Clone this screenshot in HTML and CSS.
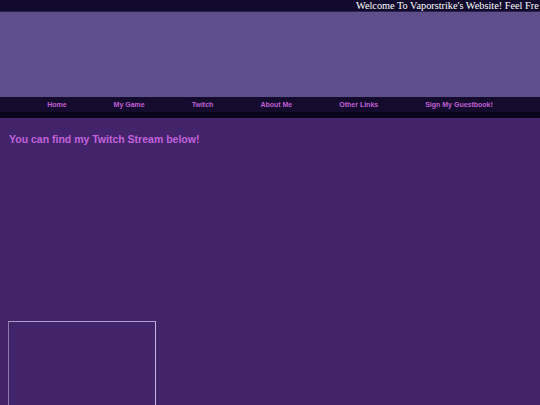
FILE: index.html
```html
<!DOCTYPE html>
<html>
<head>
<meta charset="utf-8">
<link rel="stylesheet" href="styles.css">
</head>
<body>
<div class="topbar"><span class="marquee">Welcome To Vaporstrike's Website! Feel Fre</span></div>
<div class="banner"></div>
<nav class="nav">
  <a class="nav-link" href="#">Home</a>
  <a class="nav-link" href="#">My Game</a>
  <a class="nav-link" href="#">Twitch</a>
  <a class="nav-link" href="#">About Me</a>
  <a class="nav-link" href="#">Other Links</a>
  <a class="nav-link" href="#">Sign My Guestbook!</a>
</nav>
<div class="nav-shadow"></div>
<main class="content">
  <h1 class="title">You can find my Twitch Stream below!</h1>
  <div class="player"></div>
</main>
</body>
</html>
```
FILE: styles.css
```css
html, body {
  margin: 0;
  padding: 0;
  height: 100%;
  overflow: hidden;
  background: #42246a;
}
.topbar {
  height: 12px;
  background: #120a2c;
  overflow: hidden;
  white-space: nowrap;
  border-bottom: 1px solid #2e2150;
  box-sizing: border-box;
}
.marquee {
  display: block;
  padding-left: 356px;
  font-family: "Liberation Serif", serif;
  font-size: 10.3px;
  line-height: 12px;
  color: #ffffff;
}
.banner {
  height: 85px;
  background: #5e4f8c;
}
.nav {
  height: 15px;
  background: #150b2d;
  display: flex;
  justify-content: center;
  align-items: center;
}
.nav-link {
  padding: 0 23.5px;
  font-family: "Liberation Sans", Arial, sans-serif;
  font-size: 7px;
  font-weight: bold;
  color: #c05fd6;
  text-decoration: none;
}
.nav-shadow {
  height: 6px;
  background: #0a0418;
}
.content {
  padding: 14px 8px 0;
}
.title {
  margin: 0 0 0 1px;
  font-family: "Liberation Sans", Arial, sans-serif;
  font-size: 10.5px;
  font-weight: bold;
  color: #c462dc;
  line-height: 14px;
}
.player {
  margin-top: 175px;
  width: 146px;
  height: 160px;
  border: 1px solid #b19bcf;
  border-left-color: #8f7aad;
  border-right-color: #c9b5e5;
}
```
